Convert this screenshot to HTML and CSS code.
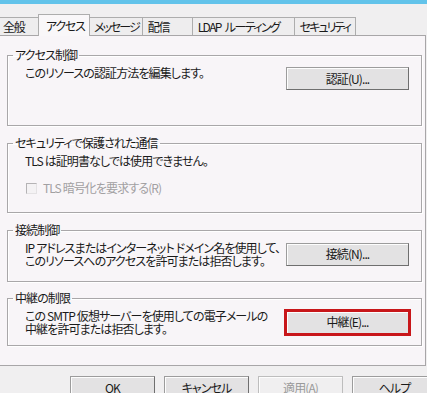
FILE: index.html
```html
<!DOCTYPE html>
<html lang="ja">
  <head>
    <meta charset="UTF-8" />
    <title>プロパティ</title>
    <link rel="stylesheet" href="styles.css">
  </head>
  <body>
    <div class="titlebar"></div>
    <ul class="tabs">
      <li class="t-general">全般</li>
      <li class="t-access on">アクセス</li>
      <li class="t-message">メッセージ</li>
      <li class="t-delivery">配信</li>
      <li class="t-ldap">LDAP ルーティング</li>
      <li class="t-security">セキュリティ</li>
    </ul>
    <div class="panel">
      <fieldset class="group g1">
        <legend>アクセス制御</legend>
        <div class="row top">
          <p>このリソースの認証方法を編集します。</p>
          <button class="btn">認証(U)...</button>
        </div>
      </fieldset>
      <fieldset class="group g2">
        <legend>セキュリティで保護された通信</legend>
        <div class="row">
          <p>TLS は証明書なしでは使用できません。</p>
        </div>
        <label class="check"><span class="box"></span>TLS 暗号化を要求する(R)</label>
      </fieldset>
      <fieldset class="group g3">
        <legend>接続制御</legend>
        <div class="row">
          <p>IP アドレスまたはインターネット ドメイン名を使用して、<br>このリソースへのアクセスを許可または拒否します。</p>
          <button class="btn">接続(N)...</button>
        </div>
      </fieldset>
      <fieldset class="group g4">
        <legend>中継の制限</legend>
        <div class="row">
          <p>この SMTP 仮想サーバーを使用しての電子メールの<br>中継を許可または拒否します。</p>
          <button class="btn marked">中継(E)...</button>
        </div>
      </fieldset>
    </div>
    <div class="actions">
      <button class="btn">OK</button>
      <button class="btn">キャンセル</button>
      <button class="btn" disabled>適用(A)</button>
      <button class="btn">ヘルプ</button>
    </div>
  </body>
</html>
```

FILE: styles.css
```css
* {
  margin: 0;
  padding: 0;
  box-sizing: border-box;
}
body {
  width: 427px;
  height: 393px;
  overflow: hidden;
  background: #f0eff0;
  color: #1a1a1a;
  font: 12px/12px "Noto Sans CJK JP", "Noto Sans", sans-serif;
  font-feature-settings: "palt";
  letter-spacing: -0.9px;
}
.titlebar {
  height: 4px;
  background: #62c3ea;
}

/* tab strip */
.tabs {
  position: relative;
  z-index: 1;
  display: flex;
  align-items: flex-end;
  height: 21px;
  margin: 10px 0 0 -2px;
  list-style: none;
  letter-spacing: -1.2px;
}
.tabs li {
  flex: none;
  height: 18px;
  padding: 0 3px 0 5px;
  margin-left: -1px;
  border: 1px solid #adadad;
  border-bottom: 0;
  background: #eeedee;
  line-height: 17px;
  white-space: nowrap;
}
.tabs li.on {
  position: relative;
  height: 22px;
  margin: 0 -2px -1px -3px;
  padding-left: 7px;
  background: #f9f7f9;
  line-height: 21px;
}
.t-general { min-width: 44px; }
.t-access { min-width: 52px; }
.t-message { min-width: 54px; padding-left: 6px !important; letter-spacing: -2px; }
.t-delivery { min-width: 51px; }
.t-ldap { min-width: 103px; letter-spacing: -1.6px; word-spacing: 3px; }
.t-security { min-width: 62px; letter-spacing: -2px; }

.panel {
  width: 427px;
  height: 331px;
  margin-left: -1px;
  padding: 12px 3px 0 7px;
  border: 1px solid #a8a6a8;
  background: #f8f5f8;
}
.group {
  margin-bottom: 10px;
  padding: 4px 12px 0 5px;
  border: 1px solid #a9a7a9;
  box-shadow: 1px 1px 0 #fff, inset 1px 1px 0 #fff;
}
.group legend {
  padding: 0 2px;
  line-height: 14px;
}
.g1 { height: 78px; }
.g2 { height: 77px; }
.g3 { height: 59px; margin-bottom: 9px; }
.g4 { height: 55px; }
.row {
  display: flex;
  align-items: center;
  justify-content: space-between;
  padding-left: 12px;
}
.row p {
  white-space: nowrap;
  line-height: 13px;
}
.row.top {
  align-items: flex-start;
}
.row.top .btn {
  margin-top: 1px;
}
.btn {
  flex: none;
  width: 123px;
  height: 23px;
  border: 1px solid #9c9c9c;
  border-right-color: #6f6f6f;
  border-bottom-color: #6f6f6f;
  background: #e3e2e3;
  box-shadow: inset 1px 1px 0 #fdfdfd;
  font: inherit;
  line-height: 20px;
  letter-spacing: -0.9px;
  color: #1a1a1a;
}
.btn.marked {
  outline: 3px solid #c8161a;
  outline-offset: -1px;
}
.btn:disabled {
  border-color: #bdbdbd;
  background: #f0eff0;
  color: #9a9a9a;
}
.check {
  display: flex;
  align-items: center;
  gap: 6px;
  margin: 14px 0 0 13px;
  line-height: 14px;
  color: #a2a0a2;
}
.check .box {
  width: 11px;
  height: 11px;
  border: 1px solid #b5b3b5;
  border-right-color: #e4e2e4;
  border-bottom-color: #e4e2e4;
  background: #f4f2f4;
}
.actions {
  display: flex;
  gap: 9px;
  margin-top: 10px;
  padding-left: 70px;
}
.actions .btn {
  width: 85px;
  height: 24px;
}
```
